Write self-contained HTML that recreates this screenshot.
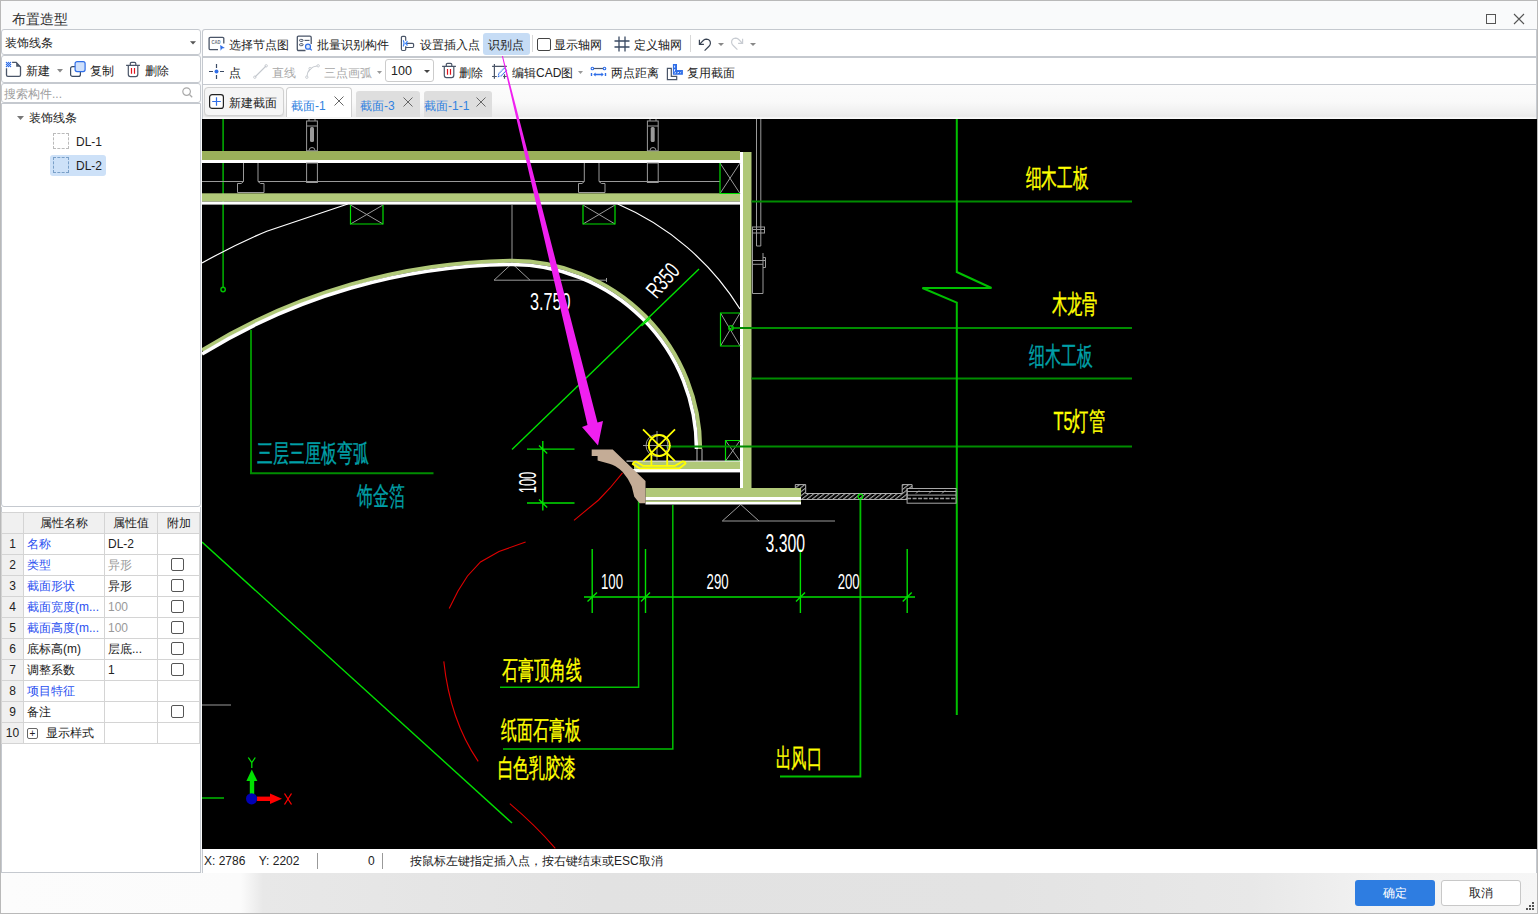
<!DOCTYPE html>
<html><head><meta charset="utf-8">
<style>
*{box-sizing:border-box;margin:0;padding:0}
html,body{width:1538px;height:914px;overflow:hidden}
body{position:relative;font-family:"Liberation Sans",sans-serif;font-size:12px;color:#222;background:#f9fafb}
.a{position:absolute;white-space:nowrap}
.box{position:absolute;background:#fff;border:1px solid #c5c9cf;border-radius:3px}
.t{position:absolute;white-space:nowrap;font-size:12px;line-height:14px;color:#222}
.g{color:#999}
.bl{color:#2a4ff0}
.ic{position:absolute;overflow:visible}
.cb{position:absolute;width:13px;height:13px;border:1px solid #555;border-radius:2px;background:#fff}
table.pt{position:absolute;left:1px;top:512px;border-collapse:collapse;table-layout:fixed;background:#fff}
table.pt td{border:1px solid #d4d4d4;height:21px;font-size:12px;padding:0 0 0 3px;white-space:nowrap;overflow:hidden;position:relative}
table.pt td.n{background:#f0f0f0;text-align:center;padding:0}
table.pt tr.h td{background:#f0f0f0;text-align:center;padding:0}
</style></head><body>
<!-- window frame -->
<div class="a" style="left:0;top:0;width:1538px;height:914px;border:1px solid #b9b9b9"></div>
<div class="a" style="left:1px;top:873px;width:1536px;height:40px;background:linear-gradient(90deg,#fcfcfc 0,#fbfbfb 240px,#e8e8e8 262px,#e2e2e2 600px,#e3e3e3 1000px,#e8e8e8 1250px,#f2f2f2 1380px,#f6f6f6 1537px)"></div>
<div class="t" style="left:12px;top:11px;font-size:14px;line-height:17px;color:#333">布置造型</div>
<div class="a" style="left:1486px;top:14px;width:10px;height:10px;border:1px solid #555"></div>
<svg class="ic" style="left:1513px;top:13px" width="12" height="12" viewBox="0 0 12 12"><path d="M1 1L11 11M11 1L1 11" stroke="#555" stroke-width="1.1"/></svg>

<!-- LEFT PANEL -->
<div class="box" style="left:1px;top:29px;width:200px;height:26px"></div>
<div class="t" style="left:5px;top:36px">装饰线条</div>
<svg class="ic" style="left:189.5px;top:41px" width="6" height="4"><path d="M0 0.2H6L3 3.6Z" fill="#555"/></svg>

<div class="box" style="left:1px;top:55px;width:200px;height:28px"></div>
<svg class="ic" style="left:4px;top:60px" width="19" height="19" viewBox="0 0 19 19">
 <path d="M2.5 8.3V15Q2.5 16.4 3.9 16.4H15.1Q16.5 16.4 16.5 15V7L12.2 2.4H8.1" fill="none" stroke="#4a5568" stroke-width="1.3"/>
 <path d="M12.2 2.4V6.8H16.5Z" fill="#4a5568"/>
 <g fill="#2f6ee8"><circle cx="2.5" cy="2.5" r="0.75"/><circle cx="4.5" cy="2.5" r="0.75"/><circle cx="6.5" cy="2.5" r="0.75"/><circle cx="3.5" cy="3.5" r="0.75"/><circle cx="5.5" cy="3.5" r="0.75"/><circle cx="4.5" cy="4.5" r="0.75"/><circle cx="2.5" cy="4.5" r="0.75"/><circle cx="6.5" cy="4.5" r="0.75"/><circle cx="3.5" cy="5.5" r="0.75"/><circle cx="5.5" cy="5.5" r="0.75"/><circle cx="2.5" cy="6.5" r="0.75"/><circle cx="4.5" cy="6.5" r="0.75"/><circle cx="6.5" cy="6.5" r="0.75"/></g>
</svg>
<div class="t" style="left:26px;top:64px">新建</div>
<svg class="ic" style="left:57px;top:69px" width="6" height="4"><path d="M0 0H6L3 3.5Z" fill="#888"/></svg>
<svg class="ic" style="left:70px;top:61px" width="16" height="16" viewBox="0 0 16 16">
 <rect x="0.6" y="5.6" width="9.8" height="9.8" rx="2" fill="#fff" stroke="#3a4a63" stroke-width="1.2"/>
 <rect x="5.1" y="0.6" width="10" height="10" rx="2" fill="#cfe0fb" stroke="#2f6ee8" stroke-width="1.2"/>
</svg>
<div class="t" style="left:90px;top:64px">复制</div>
<svg class="ic" style="left:125px;top:60px" width="16" height="17" viewBox="0 0 16 17">
 <path d="M1.1 5.4H14.9M3.3 5.4V14.2Q3.3 16.6 5.4 16.6H10.6Q12.8 16.6 12.8 14.2V5.4M5.3 5.4V3.6Q5.3 2.4 6.6 2.4H9.5Q10.8 2.4 10.8 3.6V5.4" fill="none" stroke="#4a5568" stroke-width="1.2"/>
 <path d="M6.5 8V13.8M9.5 8V13.8" stroke="#e0141e" stroke-width="1.2"/>
</svg>
<div class="t" style="left:145px;top:64px">删除</div>

<div class="box" style="left:1px;top:83px;width:200px;height:20px"></div>
<div class="t g" style="left:4px;top:87px;color:#a0a0a0">搜索构件...</div>
<svg class="ic" style="left:182px;top:87px" width="11" height="11" viewBox="0 0 11 11"><circle cx="4.6" cy="4.6" r="3.8" fill="none" stroke="#aaa" stroke-width="1.2"/><path d="M7.5 7.5L10.2 10.2" stroke="#aaa" stroke-width="1.3"/></svg>

<div class="box" style="left:1px;top:103px;width:200px;height:404px;border-radius:0 0 3px 3px"></div>
<svg class="ic" style="left:17px;top:116px" width="7" height="4"><path d="M0 0H7L3.5 4Z" fill="#777"/></svg>
<div class="t" style="left:29px;top:111px">装饰线条</div>
<div class="a" style="left:53px;top:133px;width:16px;height:16px;border:1px dashed #bbb"></div>
<div class="t" style="left:76px;top:135px;font-size:12px">DL-1</div>
<div class="a" style="left:50px;top:155px;width:56px;height:21px;background:#cde1f8;border-radius:3px"></div>
<div class="a" style="left:53px;top:157px;width:16px;height:16px;border:1px dashed #7aa0c8"></div>
<div class="t" style="left:76px;top:159px;font-size:12px">DL-2</div>

<!-- property table -->
<div class="a" style="left:1px;top:507px;width:200px;height:366px;background:#fff;border:1px solid #c5c9cf;border-top:none"></div>
<table class="pt">
<colgroup><col style="width:22px"><col style="width:81px"><col style="width:53px"><col style="width:42px"></colgroup>
<tr class="h"><td></td><td>属性名称</td><td>属性值</td><td>附加</td></tr>
<tr><td class="n">1</td><td class="bl">名称</td><td>DL-2</td><td></td></tr>
<tr><td class="n">2</td><td class="bl">类型</td><td class="g">异形</td><td><i class="cb" style="left:13px;top:3px"></i></td></tr>
<tr><td class="n">3</td><td class="bl">截面形状</td><td>异形</td><td><i class="cb" style="left:13px;top:3px"></i></td></tr>
<tr><td class="n">4</td><td class="bl">截面宽度(m...</td><td class="g">100</td><td><i class="cb" style="left:13px;top:3px"></i></td></tr>
<tr><td class="n">5</td><td class="bl">截面高度(m...</td><td class="g">100</td><td><i class="cb" style="left:13px;top:3px"></i></td></tr>
<tr><td class="n">6</td><td>底标高(m)</td><td>层底...</td><td><i class="cb" style="left:13px;top:3px"></i></td></tr>
<tr><td class="n">7</td><td>调整系数</td><td>1</td><td><i class="cb" style="left:13px;top:3px"></i></td></tr>
<tr><td class="n">8</td><td class="bl">项目特征</td><td></td><td></td></tr>
<tr><td class="n">9</td><td>备注</td><td></td><td><i class="cb" style="left:13px;top:3px"></i></td></tr>
<tr><td class="n">10</td><td style="padding-left:22px"><i class="a" style="left:3px;top:5px;width:11px;height:11px;border:1px solid #666;border-radius:2px;font-style:normal;font-size:10px;line-height:9px;text-align:center">+</i>显示样式</td><td></td><td></td></tr>
</table>

<!-- RIGHT TOOLBAR 1 -->
<div class="a" style="left:202px;top:29px;width:1335px;height:29px;background:#fff;border:1px solid #c5c9cf;border-bottom:2px solid #c5c9cf;border-radius:3px 0 0 0"></div>
<svg class="ic" style="left:208px;top:36px" width="18" height="16" viewBox="0 0 18 16">
 <path d="M15.8 7.6V2.6Q15.8 1.3 14.5 1.3H2.4Q1.1 1.3 1.1 2.6V12.4Q1.1 13.7 2.4 13.7H10" fill="none" stroke="#4a5568" stroke-width="1.3"/>
 <text x="3.6" y="7.7" font-size="4.6" font-family="Liberation Sans" fill="#6b7280" font-weight="bold" textLength="9" lengthAdjust="spacingAndGlyphs">CAD</text>
 <path d="M12.2 9L16.9 12.1L14.1 12.6L12.6 14.8Z" fill="#2f6ee8"/>
</svg>
<div class="t" style="left:229px;top:38px">选择节点图</div>
<svg class="ic" style="left:296px;top:35px" width="17" height="17" viewBox="0 0 17 17">
 <path d="M9.5 15.5H2.6Q1.3 15.5 1.3 14.2V2.4Q1.3 1.1 2.6 1.1H13.9Q15.2 1.1 15.2 2.4V9" fill="none" stroke="#4a5568" stroke-width="1.3"/>
 <rect x="3.5" y="4.4" width="3.6" height="2" rx="1" fill="none" stroke="#4a5568" stroke-width="1"/>
 <path d="M8.5 5.4H13.5" stroke="#4a5568" stroke-width="1.1"/>
 <rect x="3.5" y="8.7" width="3.6" height="2" rx="1" fill="none" stroke="#4a5568" stroke-width="1"/>
 <circle cx="12" cy="11.7" r="2.5" fill="#dbe8fb" stroke="#2f6ee8" stroke-width="1.2"/><path d="M13.8 13.5L15.8 15.4" stroke="#2f6ee8" stroke-width="1.3"/>
</svg>
<div class="t" style="left:317px;top:38px">批量识别构件</div>
<svg class="ic" style="left:400px;top:35px" width="16" height="17" viewBox="0 0 16 17">
 <path d="M5.7 5.7V2.5Q5.7 1.3 4.5 1.3H2.6Q1.4 1.3 1.4 2.5V14.3Q1.4 15.5 2.6 15.5H4.5Q5.7 15.5 5.7 14.3V11.2" fill="none" stroke="#4a5568" stroke-width="1.2"/>
 <path d="M5.7 12.5H12.4Q13.6 12.5 13.6 11.3V9.6Q13.6 8.4 12.4 8.4H7" fill="none" stroke="#4a5568" stroke-width="1.2"/>
 <path d="M3.2 5.3Q5 8.4 3.2 11.6M7.4 6Q5.5 8.4 7.4 10.6" fill="none" stroke="#3b82f6" stroke-width="1.1"/>
 <circle cx="5.9" cy="8.4" r="0.9" fill="#3b82f6"/>
</svg>
<div class="t" style="left:420px;top:38px">设置插入点</div>
<div class="a" style="left:483px;top:33px;width:47px;height:22px;background:#c6dcf5;border-radius:3px"></div>
<div class="t" style="left:488px;top:38px">识别点</div>
<div class="a" style="left:532px;top:35px;width:1px;height:17px;background:#d8d8d8"></div>
<div class="a" style="left:537px;top:37.5px;width:14px;height:13.5px;border:1px solid #444;border-radius:2px;background:#fff"></div>
<div class="t" style="left:554px;top:38px">显示轴网</div>
<svg class="ic" style="left:614px;top:36px" width="16" height="16" viewBox="0 0 16 16"><path d="M5 0.5V15.5M11 0.5V15.5M0.5 5H15.5M0.5 11H15.5" stroke="#3a4a63" stroke-width="1.3"/></svg>
<div class="t" style="left:634px;top:38px">定义轴网</div>
<div class="a" style="left:690px;top:35px;width:1px;height:17px;background:#d8d8d8"></div>
<svg class="ic" style="left:698px;top:37px" width="14" height="15" viewBox="0 0 14 15">
 <path d="M1.4 2.8V7.4H5.9M1.7 7.1L5.5 3.3Q7 2.2 8.4 2.2Q12.6 2.5 12.4 6.5Q12.2 8 11 9.3L6.6 13.6" fill="none" stroke="#374151" stroke-width="1.2"/>
</svg>
<svg class="ic" style="left:718px;top:43px" width="6" height="3"><path d="M0 0H6L3 3Z" fill="#888"/></svg>
<svg class="ic" style="left:730px;top:36px" width="14" height="15" viewBox="0 0 14 15">
 <path d="M12.6 2.8V7.4H8.1M12.3 7.1L8.5 3.3Q7 2.2 5.6 2.2Q1.4 2.5 1.6 6.5Q1.8 8 3 9.3L7.4 13.6" fill="none" stroke="#c8ccd2" stroke-width="1.2"/>
</svg>
<svg class="ic" style="left:749.5px;top:43px" width="6" height="3"><path d="M0 0H6L3 3Z" fill="#888"/></svg>

<!-- RIGHT TOOLBAR 2 -->
<div class="a" style="left:202px;top:58px;width:1335px;height:27px;background:#fff;border:1px solid #c5c9cf;border-top:none"></div>
<svg class="ic" style="left:208px;top:63px" width="17" height="17" viewBox="0 0 17 17">
 <path d="M8.5 1V5M8.5 12V16M1 8.5H5M12 8.5H16" stroke="#3a4a63" stroke-width="1.2"/>
 <circle cx="8.5" cy="8.5" r="2" fill="#2f6ee8"/>
</svg>
<div class="t" style="left:229px;top:66px">点</div>
<svg class="ic" style="left:253px;top:64px" width="15" height="15" viewBox="0 0 15 15"><path d="M2 13L13 2" stroke="#c4c8ce" stroke-width="1.1"/><circle cx="1.8" cy="13.2" r="1.2" fill="none" stroke="#c4c8ce" stroke-width="0.9"/><circle cx="13.2" cy="1.8" r="1.2" fill="none" stroke="#c4c8ce" stroke-width="0.9"/></svg>
<div class="t g" style="left:272px;top:66px;color:#a8a8a8">直线</div>
<svg class="ic" style="left:305px;top:64px" width="15" height="15" viewBox="0 0 15 15"><path d="M1.8 13Q2.5 3 13 1.8" fill="none" stroke="#c4c8ce" stroke-width="1.1"/><circle cx="1.8" cy="13.2" r="1.2" fill="#fff" stroke="#c4c8ce" stroke-width="0.9"/><circle cx="13.2" cy="1.8" r="1.2" fill="#fff" stroke="#c4c8ce" stroke-width="0.9"/><circle cx="5" cy="4.5" r="1.1" fill="#fff" stroke="#c4c8ce" stroke-width="0.9"/></svg>
<div class="t g" style="left:324px;top:66px;color:#a8a8a8">三点画弧</div>
<svg class="ic" style="left:377px;top:71px" width="5" height="3"><path d="M0 0H5L2.5 3Z" fill="#999"/></svg>
<div class="a" style="left:385px;top:59px;width:49px;height:23px;border:1px solid #ccc;border-radius:3px;background:#fff"></div>
<div class="t" style="left:391px;top:64px;font-size:12.5px">100</div>
<svg class="ic" style="left:424px;top:70px" width="6" height="3"><path d="M0 0H6L3 3Z" fill="#444"/></svg>
<svg class="ic" style="left:440.5px;top:61px" width="16" height="17" viewBox="0 0 16 17">
 <path d="M1.1 5.4H14.9M3.3 5.4V14.2Q3.3 16.6 5.4 16.6H10.6Q12.8 16.6 12.8 14.2V5.4M5.3 5.4V3.6Q5.3 2.4 6.6 2.4H9.5Q10.8 2.4 10.8 3.6V5.4" fill="none" stroke="#4a5568" stroke-width="1.2"/>
 <path d="M6.5 8V13.8M9.5 8V13.8" stroke="#e0141e" stroke-width="1.2"/>
</svg>
<div class="t" style="left:459px;top:66px">删除</div>
<svg class="ic" style="left:490px;top:62px" width="19" height="19" viewBox="0 0 19 19">
 <path d="M2.1 4.4H16.8M4.4 2.1V16.7M2.1 14.5H6.8M14.5 12.3V16.7M13.1 14.5H16.8" fill="none" stroke="#4a5568" stroke-width="1.2"/>
 <path d="M8.4 14.6L8.7 11.6L14.2 6.1L16.5 8.3L11.1 13.9Z" fill="#fff" stroke="#2f6ee8" stroke-width="1.1" stroke-dasharray="1 0.5"/>
</svg>
<div class="t" style="left:512px;top:66px">编辑CAD图</div>
<svg class="ic" style="left:578px;top:71px" width="5" height="3"><path d="M0 0H5L2.5 3Z" fill="#999"/></svg>
<svg class="ic" style="left:589px;top:64px" width="19" height="14" viewBox="0 0 19 14">
 <path d="M4.6 4.5H14.3" stroke="#4a5568" stroke-width="1.2"/>
 <circle cx="3.4" cy="4.5" r="1.3" fill="#fff" stroke="#2f6ee8" stroke-width="1.1"/><circle cx="15.5" cy="4.5" r="1.3" fill="#fff" stroke="#2f6ee8" stroke-width="1.1"/>
 <path d="M2.5 9V11.9M16.5 9V11.9M5.5 10.5H13.5" stroke="#2f6ee8" stroke-width="1.4"/>
 <path d="M4.3 10.5L6.6 8.6V12.4Z M14.7 10.5L12.4 8.6V12.4Z" fill="#2f6ee8"/>
</svg>
<div class="t" style="left:611px;top:66px">两点距离</div>
<svg class="ic" style="left:665px;top:62px" width="19" height="19" viewBox="0 0 19 19">
 <path d="M2.4 6.3H6.3V14.3H11.7V17.6H2.4Z" fill="#fff" stroke="#4a5568" stroke-width="1.2"/>
 <path d="M7.9 2.1H12V8.1H17.9V12.7H7.9Z" fill="#2f6ee8"/>
 <path d="M9.6 3.6V5.6M9.8 7L9.3 9.5M9.5 11.2L11 10.6M12.3 11L14 10.3M15.2 11L16.2 10.1" stroke="#fff" stroke-width="0.9"/>
</svg>
<div class="t" style="left:687px;top:66px">复用截面</div>

<!-- TABS -->
<div class="a" style="left:202px;top:85px;width:1335px;height:34px;background:linear-gradient(#fcfcfc 0,#f9f9f9 50%,#eeeeee 85%,#e9e9e9 92%,#f6f6f6 96%,#fcfcfc 100%);border-left:1px solid #c5c9cf;border-right:1px solid #c5c9cf"></div>
<div class="a" style="left:204px;top:87px;width:80px;height:29px;background:#f5f5f5;border:1px solid #d0d0d0;border-radius:4px;box-shadow:0 1px 1px #ddd"></div>
<svg class="ic" style="left:209px;top:94px" width="15" height="15" viewBox="0 0 15 15"><rect x="0.6" y="0.6" width="13.8" height="13.8" rx="2.5" fill="#fff" stroke="#222" stroke-width="1.2"/><path d="M7.5 3.2V11.8M3.2 7.5H11.8" stroke="#2f6ee8" stroke-width="1.2"/></svg>
<div class="t" style="left:229px;top:96px">新建截面</div>
<div class="a" style="left:286px;top:87px;width:66px;height:30px;background:#fff;border:1px solid #d0d0d0;border-bottom:none;border-radius:4px 4px 0 0"></div>
<div class="t bl" style="left:291px;top:99px;color:#3182e0">截面-1</div>
<svg class="ic" style="left:334px;top:95.5px" width="10" height="10" viewBox="0 0 10 10"><path d="M0.5 0.5L9.5 9.5M9.5 0.5L0.5 9.5" stroke="#666" stroke-width="1"/></svg>
<div class="a" style="left:356px;top:91px;width:64px;height:26px;background:#dedede;border-radius:3px 3px 0 0"></div>
<div class="t bl" style="left:360px;top:99px;color:#3182e0">截面-3</div>
<svg class="ic" style="left:403px;top:96.5px" width="10" height="10" viewBox="0 0 10 10"><path d="M0.5 0.5L9.5 9.5M9.5 0.5L0.5 9.5" stroke="#666" stroke-width="1"/></svg>
<div class="a" style="left:424px;top:91px;width:68px;height:26px;background:#dedede;border-radius:3px 3px 0 0"></div>
<div class="t bl" style="left:424px;top:99px;color:#3182e0">截面-1-1</div>
<svg class="ic" style="left:475.5px;top:96.5px" width="10" height="10" viewBox="0 0 10 10"><path d="M0.5 0.5L9.5 9.5M9.5 0.5L0.5 9.5" stroke="#666" stroke-width="1"/></svg>

<!-- STATUS BAR -->
<div class="a" style="left:202px;top:849px;width:1335px;height:24px;background:#fff;border-left:1px solid #c5c9cf;border-right:1px solid #c5c9cf"></div>
<div class="t" style="left:204px;top:854px">X: 2786&nbsp;&nbsp;&nbsp;&nbsp;Y: 2202</div>
<div class="a" style="left:317px;top:853px;width:1px;height:16px;background:#999"></div>
<div class="t" style="left:368px;top:854px">0</div>
<div class="a" style="left:382px;top:853px;width:1px;height:16px;background:#999"></div>
<div class="t" style="left:410px;top:854px">按鼠标左键指定插入点，按右键结束或ESC取消</div>

<!-- BUTTONS -->
<div class="a" style="left:1355px;top:880px;width:80px;height:26px;background:#2e7de1;border-radius:3px;color:#fff;font-size:12px;line-height:27px;text-align:center">确定</div>
<div class="a" style="left:1441px;top:880px;width:80px;height:26px;background:#fff;border:1px solid #c8c8c8;border-radius:3px;color:#222;font-size:12px;line-height:25px;text-align:center">取消</div>
<svg class="ic" style="left:1526px;top:902px" width="8" height="8"><g fill="#555"><rect x="6" y="0" width="2" height="2"/><rect x="3" y="3" width="2" height="2"/><rect x="6" y="3" width="2" height="2"/><rect x="0" y="6" width="2" height="2"/><rect x="3" y="6" width="2" height="2"/><rect x="6" y="6" width="2" height="2"/></g></svg>

<svg class="a" style="left:0;top:0" width="1538" height="914" viewBox="0 0 1538 914">
<defs><clipPath id="cv"><rect x="202" y="119" width="1335" height="730"/></clipPath></defs>
<rect x="202" y="119" width="1335" height="730" fill="#000"/>
<g clip-path="url(#cv)">
 <g fill="none" stroke="#00c000" stroke-width="1.4"><path d="M223.1 119V287"/><circle cx="223.1" cy="289.5" r="2.2"/></g>
 <!-- top ceiling bands -->
 <rect x="202" y="151" width="538" height="9" fill="#9bb05a"/>
 <rect x="202" y="160" width="538" height="3" fill="#fff"/>
 <rect x="202" y="193.3" width="538" height="8.3" fill="#b0c878"/>
 <rect x="202" y="201.6" width="538" height="3" fill="#fff"/>
 <rect x="740" y="152" width="3" height="337" fill="#fff"/>
 <rect x="743" y="152" width="8.5" height="337" fill="#b0c878"/>
 <g fill="none" stroke="#9a9a9a" stroke-width="1">
  <path d="M202 181.5H243.5M258 181.5H584.3M599 181.5H720"/>
  <!-- channels -->
  <path d="M243.5 163V181.5L241.2 183.5H237.5V192.5H264V183.5H260.5L258 181.5V163"/>
  <path d="M584.3 163V181.5L582 183.5H578.5V192.5H605V183.5H601.5L599 181.5V163"/>
  <!-- hangers -->
  <rect x="306.6" y="121" width="10.8" height="29.8"/>
  <rect x="306.6" y="163" width="10.8" height="19.5"/>
  <rect x="647.4" y="121" width="10.8" height="29.8"/>
  <rect x="647.4" y="163" width="10.8" height="19.5"/>
  <path d="M306.6 126H317.4M647.4 126H658.2M309 118.5V121M315 118.5V121M650 118.5V121M656 118.5V121M309 150.5A3 3 0 0 1 315 150.5M650 150.5A3 3 0 0 1 656 150.5"/>
  <!-- rods right -->
  <path d="M756.5 118.5V246M760.8 118.5V246M756.5 246H760.8"/>
  <rect x="752.5" y="227" width="12" height="6"/>
  <path d="M752.5 233V293.5H763V253M752.5 260.5H765.5M752.5 264.3H763M763 257.5H765.5V267.5H763M752.5 229.5H764.5"/>
  <!-- X boxes gray crosses -->
  <path d="M350.5 205L383 224M383 205L350.5 224M583 205L615 224M615 205L583 224M720 163L740 193.5M740 163L720 193.5M720.5 313L740 346M740 313L720.5 346M725.5 440.5L740 461M740 440.5L725.5 461"/>
  <!-- triangle 3.750 -->
  <path d="M512 204.5V263.5M512 263.5L494 280.2H606.5M512 263.5L530 280.2M606.5 278V282"/>
  <!-- triangle 3.300 -->
  <path d="M740.7 504.5L722.3 521H835M740.7 504.5L759 521"/>
  <path d="M202 705H231"/>
 </g>
 <g fill="#9a9a9a"><rect x="310" y="127" width="4" height="15" rx="1.5"/><rect x="650.7" y="127" width="4" height="15" rx="1.5"/></g>
 <!-- green X box borders -->
 <g fill="none" stroke="#00e000" stroke-width="1.2">
  <path d="M350.5 205V224H383V205M583 205V224H615V205M720 163V193.5H740M740 313H720.5V346H740M740 440.5H725.5V461H740"/>
 </g>
 <!-- thin white curves -->
 <g fill="none" stroke="#fff" stroke-width="1.2">
  <path d="M202 263Q236 244 266.8 231.2L347.8 204"/>
  <path d="M617.7 204A268 268 0 0 1 740 309"/>
 </g>
 <!-- big arc band -->
 <path d="M202 350.3A605.2 605.2 0 0 1 512 260.8A188.2 188.2 0 0 1 700.2 449" fill="none" stroke="#b0c878" stroke-width="4"/>
 <path d="M202 354A601.5 601.5 0 0 1 512 264.5A184.5 184.5 0 0 1 696.5 449" fill="none" stroke="#fff" stroke-width="3.6"/>
 <path d="M697 449V461M702 449V461" stroke="#9a9a9a" stroke-width="1.2"/>
 <!-- green lines -->
 <g fill="none" stroke="#008c00" stroke-width="2">
  <path d="M751.5 201.5H1132M731 328H1132M751.5 378.5H1132M666 446.5H1132"/>
  <path d="M251 330V473.3H433.5"/>
  <path d="M202 798H224"/>
 </g>
 <g fill="none" stroke="#00c000" stroke-width="1.5">
  <path d="M638.6 498V687.3H500M672.8 505V749H503"/>
  <circle cx="731" cy="328" r="2.2"/>
 </g>
 <path d="M956.8 119V272L991.5 288H922.4L956.8 302.7V715" fill="none" stroke="#00c000" stroke-width="2"/>
 <path d="M860.4 500V776.5H780" fill="none" stroke="#00c000" stroke-width="1.8"/>
 <g fill="none" stroke="#00e000" stroke-width="1.4">
  <path d="M512 449.5L699 268.9"/>
  <path d="M542.8 441V510.5M527 449.1H574.5M527 503H574.5M539 445.5L547.2 453.5M539 499.4L547.2 507.4"/>
  <path d="M202 542L512 823"/>
  <path d="M584 597H915M592.2 549V613M645.5 549V613M800.4 549V613M907.2 549V613"/>
  <path d="M587.5 601.5L597 592.5M641 601.5L650 592.5M796 601.5L805 592.5M902.7 601.5L911.7 592.5"/>
  <path d="M641.5 326L650.5 318"/>
 </g>
 <!-- red hidden arc -->
 <g fill="none" stroke="#e00000" stroke-width="1.1">
  <path d="M622.5 472.8L610 488L598.6 500L574 520.3"/>
  <path d="M525.6 542L499 551.5L480.5 562L467.5 576L458 591L449.2 608.5"/>
  <path d="M443.8 661.4Q450 720 478.2 761.4"/>
  <path d="M509.8 803.7Q535 825 555.3 848.3"/>
 </g>
 <!-- hatched channel -->
 <defs><pattern id="hp" patternUnits="userSpaceOnUse" width="3.2" height="10" patternTransform="rotate(52)"><rect x="0" y="0" width="1.1" height="10" fill="#a8a8a8"/></pattern></defs>
 <path d="M795.3 484.6H805.7V493.5H902.2V484.6H912.1V488.5H907.1V499.5H795.3Z" fill="url(#hp)" stroke="#b0b0b0" stroke-width="1"/>
 <g fill="none" stroke="#a8a8a8" stroke-width="1">
  <rect x="907.1" y="488.5" width="49" height="14.7"/>
  <path d="M907.1 495.1H956M907.1 491.5H956"/>
 </g>
 <path d="M907.1 498.6H956" stroke="#9a9a9a" stroke-width="1.5" stroke-dasharray="4 1.5"/>
 <path d="M916 493.5L919 490.5M929 493.5L932 490.5M942 493.5L945 490.5" stroke="#a8a8a8" stroke-width="1"/>
 <circle cx="860.4" cy="496.5" r="2.4" fill="none" stroke="#00e000" stroke-width="1.2"/>
 <!-- lower bands -->
 <rect x="634" y="461.2" width="106" height="7.8" fill="#b0c878"/>
 <rect x="626.5" y="469" width="113.5" height="3.4" fill="#fff"/>
 <rect x="626.5" y="460.6" width="113.5" height="1" fill="#fff"/>
 <rect x="645.5" y="488" width="155.5" height="9" fill="#b0c878"/>
 <rect x="645.5" y="497" width="155.5" height="3.5" fill="#fff"/>
 <rect x="645.5" y="500.5" width="155.5" height="1.5" fill="#b0c878"/>
 <rect x="645.5" y="502" width="155.5" height="2.5" fill="#fff"/>
 <!-- molding -->
 <path d="M591.7 449.4H612.7L645.5 480.9V503.2H639.6L634.3 496.7L631.7 486.2Q628 478 622.5 471.7Q615 465 609.4 463.8L597.6 460.5V456H591.7Z" fill="#c4ac96"/>
 <!-- lamp -->
 <g fill="none" stroke="#9a9a9a" stroke-width="1">
  <circle cx="657" cy="445.5" r="11"/>
  <path d="M657 431V460M643 445.5H671"/>
 </g>
 <g fill="none" stroke="#ffff00" stroke-width="1.8">
  <circle cx="659.3" cy="445.5" r="10.5"/>
  <path d="M643 429.4L675 461.2M675 429.4L643 461.2M651.4 453V466M667.2 453V466"/>
  <path d="M632.8 464Q633.5 461.5 636 461.6L643 465.8H675L682.5 461.4Q685.5 461.4 685.5 463.5L679.5 468.3H639.5Z"/>
 </g>
 <!-- axis -->
 <rect x="249.8" y="779" width="4.4" height="19" fill="#00e000"/>
 <path d="M246.4 781H257.4L251.8 769.6Z" fill="#00e000"/>
 <rect x="257" y="796.6" width="13.5" height="4.4" fill="#ff0000"/>
 <path d="M270 793.5V804L282 798.8Z" fill="#ff0000"/>
 <circle cx="251.6" cy="798.8" r="5.6" fill="#0000b4"/>
 <path d="M248.3 757.5L251.8 762.5L255.3 757.5M251.8 762.5V768" fill="none" stroke="#00e000" stroke-width="1.3"/>
 <path d="M284.5 793.5L291.5 804.5M291.5 793.5L284.5 804.5" fill="none" stroke="#ff0000" stroke-width="1.3"/>
 <!-- TEXTS -->
 <g font-family="Liberation Sans" fill="#fff">
  <text x="530" y="310.4" font-size="24" textLength="40.6" lengthAdjust="spacingAndGlyphs">3.750</text>
  <text x="765.5" y="552" font-size="26" textLength="39.5" lengthAdjust="spacingAndGlyphs">3.300</text>
  <text x="601" y="589" font-size="21.5" textLength="22" lengthAdjust="spacingAndGlyphs">100</text>
  <text x="706.6" y="589" font-size="21.5" textLength="22" lengthAdjust="spacingAndGlyphs">290</text>
  <text x="837.7" y="589" font-size="21.5" textLength="22" lengthAdjust="spacingAndGlyphs">200</text>
  <text transform="translate(535.5 493.3) rotate(-90)" font-size="23" textLength="21.6" lengthAdjust="spacingAndGlyphs">100</text>
  <text transform="translate(656.5 299.5) rotate(-49)" font-size="23" textLength="37" lengthAdjust="spacingAndGlyphs">R350</text>
 </g>
 <g fill="#ffff00" stroke="#ffff00" stroke-width="0.35" font-family="Liberation Sans">
  <text x="1025.6" y="187" font-size="26" textLength="63" lengthAdjust="spacingAndGlyphs">细木工板</text>
  <text x="1051.5" y="312.5" font-size="26" textLength="46" lengthAdjust="spacingAndGlyphs">木龙骨</text>
  <text x="1053.5" y="429.5" font-size="26" textLength="51.5" lengthAdjust="spacingAndGlyphs">T5灯管</text>
  <text x="502.2" y="679" font-size="25.5" textLength="79.2" lengthAdjust="spacingAndGlyphs">石膏顶角线</text>
  <text x="501.3" y="739.2" font-size="25.5" textLength="79.5" lengthAdjust="spacingAndGlyphs">纸面石膏板</text>
  <text x="497.5" y="776.5" font-size="25.5" textLength="78.5" lengthAdjust="spacingAndGlyphs">白色乳胶漆</text>
  <text x="776" y="767" font-size="26" textLength="46" lengthAdjust="spacingAndGlyphs">出风口</text>
 </g>
 <g fill="#00a0a8" stroke="#00a0a8" stroke-width="0.35" font-family="Liberation Sans">
  <text x="1028.9" y="364.5" font-size="26" textLength="63.6" lengthAdjust="spacingAndGlyphs">细木工板</text>
  <text x="257" y="462" font-size="25" textLength="111.5" lengthAdjust="spacingAndGlyphs">三层三厘板弯弧</text>
  <text x="357.3" y="504.5" font-size="26" textLength="47.5" lengthAdjust="spacingAndGlyphs">饰金箔</text>
 </g>
</g>
<!-- magenta arrow -->
<path d="M501.9 56L502.9 56L597.5 422.5L603 421L598 445.5L582 427L587.5 425Z" fill="#f020f0"/>
</svg>

</body></html>
